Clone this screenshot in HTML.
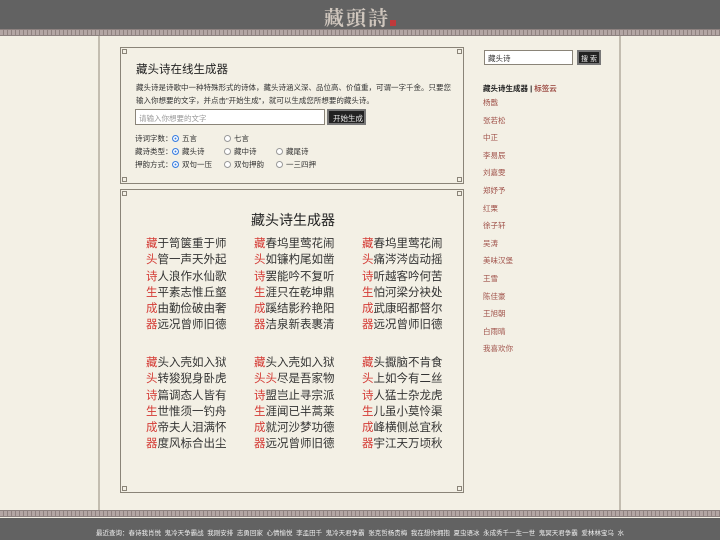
<!DOCTYPE html>
<html><head><meta charset="utf-8"><style>
*{margin:0;padding:0;box-sizing:border-box}
body{width:720px;height:540px;overflow:hidden;background:#f3f0e5;font-family:"Liberation Sans","Noto Sans CJK SC",sans-serif;position:relative;color:#333}
.hdr{position:absolute;left:0;top:0;width:720px;height:29px;background:#626262}
.logo{position:absolute;left:324px;top:2px;font-family:"Noto Serif CJK SC",serif;font-size:20px;color:#cfc6bd;letter-spacing:2px;font-weight:bold}
.logo i{position:absolute;right:-6px;bottom:5px;width:6px;height:6px;background:#c0393b}
.band{position:absolute;left:0;width:720px;height:7px;background:repeating-linear-gradient(90deg,#b3a6a4 0 3px,#8f8280 3px 4px);border-top:1px solid #8d8280;border-bottom:1px solid #8d8280}
.vl{position:absolute;top:36px;width:2px;height:474px;background:#c3bdb0}
.box{position:absolute;left:120px;width:344px;border:1px solid #8a8478}
.k{position:absolute;width:5px;height:5px;background:#f3f0e5;border:1px solid #8a8478}
.ft{position:absolute;left:0;top:518px;width:720px;height:22px;background:#626262;color:#eee;font-size:6.5px;text-align:center;padding-top:9px;white-space:nowrap}
.p{position:absolute;font-size:11.5px;line-height:16.3px;color:#333;white-space:nowrap}
.p b{font-weight:normal;color:#d43b35}
.s{position:absolute;font-size:7.5px}
.rad{display:inline-block;width:7px;height:7px;border-radius:50%;border:1px solid #999;background:#fff;vertical-align:-1px;margin-right:3px}
.on{background:#3b7fe0;border-color:#3b7fe0;box-shadow:inset 0 0 0 1.5px #fff}
.side a{display:block;color:#a0524a;font-size:7.5px;height:17.6px;text-decoration:none}
</style></head><body>
<div class="hdr"><div class="logo">藏頭詩<i></i></div></div>
<div class="band" style="top:29px"></div>
<div class="vl" style="left:98px"></div><div class="vl" style="left:619px"></div>

<div class="box" style="top:47px;height:137px"></div>
<div class="box" style="top:189px;height:304px"></div>
<div class="k" style="left:122px;top:49px"></div><div class="k" style="left:457px;top:49px"></div>
<div class="k" style="left:122px;top:177px"></div><div class="k" style="left:457px;top:177px"></div>
<div class="k" style="left:122px;top:191px"></div><div class="k" style="left:457px;top:191px"></div>
<div class="k" style="left:122px;top:486px"></div><div class="k" style="left:457px;top:486px"></div>

<div style="position:absolute;left:136px;top:61px;font-size:11.5px;color:#222">藏头诗在线生成器</div>
<div class="s" style="left:136px;top:81px;width:320px;line-height:13px;color:#333">藏头诗是诗歌中一种特殊形式的诗体，藏头诗涵义深、品位高、价值重，可谓一字千金。只要您输入你想要的文字，并点击"开始生成"，就可以生成您所想要的藏头诗。</div>
<div style="position:absolute;left:135px;top:109px;width:190px;height:16px;border:1px solid #8a8478;background:#fff;font-size:7.5px;color:#999;padding:3px 3px">请输入你想要的文字</div>
<div style="position:absolute;left:327px;top:109px;width:39px;height:16px;background:#222;border:2px solid #777;color:#eee;font-size:7.5px;padding:2px 0 0 4px;white-space:nowrap">开始生成</div>
<div class="s" style="left:135px;top:132px;line-height:13px">诗词字数：<br>藏诗类型：<br>押韵方式：</div>
<div class="s" style="left:172px;top:132px;line-height:13px"><span class="rad on"></span>五言<br><span class="rad on"></span>藏头诗<br><span class="rad on"></span>双句一压</div>
<div class="s" style="left:224px;top:132px;line-height:13px"><span class="rad"></span>七言<br><span class="rad"></span>藏中诗<br><span class="rad"></span>双句押韵</div>
<div class="s" style="left:276px;top:145px;line-height:13px"><span class="rad"></span>藏尾诗<br><span class="rad"></span>一三四押</div>

<div style="position:absolute;left:251px;top:210px;font-size:14px;color:#222">藏头诗生成器</div>
<div class="p" style="left:146px;top:236px"><b>藏</b>于笥箧重于师<br><b>头</b>管一声天外起<br><b>诗</b>人浪作水仙歌<br><b>生</b>平素志惟丘壑<br><b>成</b>由勤俭破由奢<br><b>器</b>远况曾师旧德</div>
<div class="p" style="left:254px;top:236px"><b>藏</b>春坞里莺花闹<br><b>头</b>如镰杓尾如凿<br><b>诗</b>罢能吟不复听<br><b>生</b>涯只在乾坤鼎<br><b>成</b>蹊结影矜艳阳<br><b>器</b>洁泉新表裹清</div>
<div class="p" style="left:362px;top:236px"><b>藏</b>春坞里莺花闹<br><b>头</b>痛涔涔齿动摇<br><b>诗</b>听越客吟何苦<br><b>生</b>怕河梁分袂处<br><b>成</b>武康昭都督尔<br><b>器</b>远况曾师旧德</div>
<div class="p" style="left:146px;top:355px"><b>藏</b>头入壳如入狱<br><b>头</b>转狻猊身卧虎<br><b>诗</b>篇调态人皆有<br><b>生</b>世惟须一钓舟<br><b>成</b>帝夫人泪满怀<br><b>器</b>度风标合出尘</div>
<div class="p" style="left:254px;top:355px"><b>藏</b>头入壳如入狱<br><b>头头</b>尽是吾家物<br><b>诗</b>盟岂止寻宗派<br><b>生</b>涯闻已半蒿莱<br><b>成</b>就河沙梦功德<br><b>器</b>远况曾师旧德</div>
<div class="p" style="left:362px;top:355px"><b>藏</b>头擫脑不肯食<br><b>头</b>上如今有二丝<br><b>诗</b>人猛士杂龙虎<br><b>生</b>儿虽小莫怜渠<br><b>成</b>峰横侧总宜秋<br><b>器</b>宇江天万顷秋</div>

<div style="position:absolute;left:484px;top:50px;width:89px;height:15px;border:1px solid #8a8478;background:#fff;font-size:7.5px;padding:2px 3px">藏头诗</div>
<div style="position:absolute;left:577px;top:50px;width:24px;height:15px;background:#222;border:2px solid #777;color:#eee;font-size:7px;padding:2px 0 0 2px;white-space:nowrap">搜 索</div>
<div class="s" style="left:483px;top:83px;font-weight:bold;color:#222">藏头诗生成器 | <span style="color:#a0524a">标签云</span></div>
<div class="side" style="position:absolute;left:483px;top:97px">
<a>杨戬</a><a>张若松</a><a>中正</a><a>李易辰</a><a>刘嘉雯</a><a>郑妤予</a><a>红栗</a><a>徐子轩</a><a>吴涛</a><a>美味汉堡</a><a>王雪</a><a>陈佳豪</a><a>王旭朝</a><a>白雨晴</a><a>我喜欢你</a></div>

<div class="band" style="top:510px"></div>
<div class="ft">最近查询：春诗我肖悦&nbsp; 鬼冷天争霸战&nbsp; 我刚安排&nbsp; 志勇回家&nbsp; 心情愉悦&nbsp; 李孟田千&nbsp; 鬼冷天君争霸&nbsp; 张克哲杨贵梅&nbsp; 我在想你拥抱&nbsp; 夏虫语冰&nbsp; 永成秀千一生一世&nbsp; 鬼冥天君争霸&nbsp; 爱林林宝乌&nbsp; 水</div>
</body></html>
